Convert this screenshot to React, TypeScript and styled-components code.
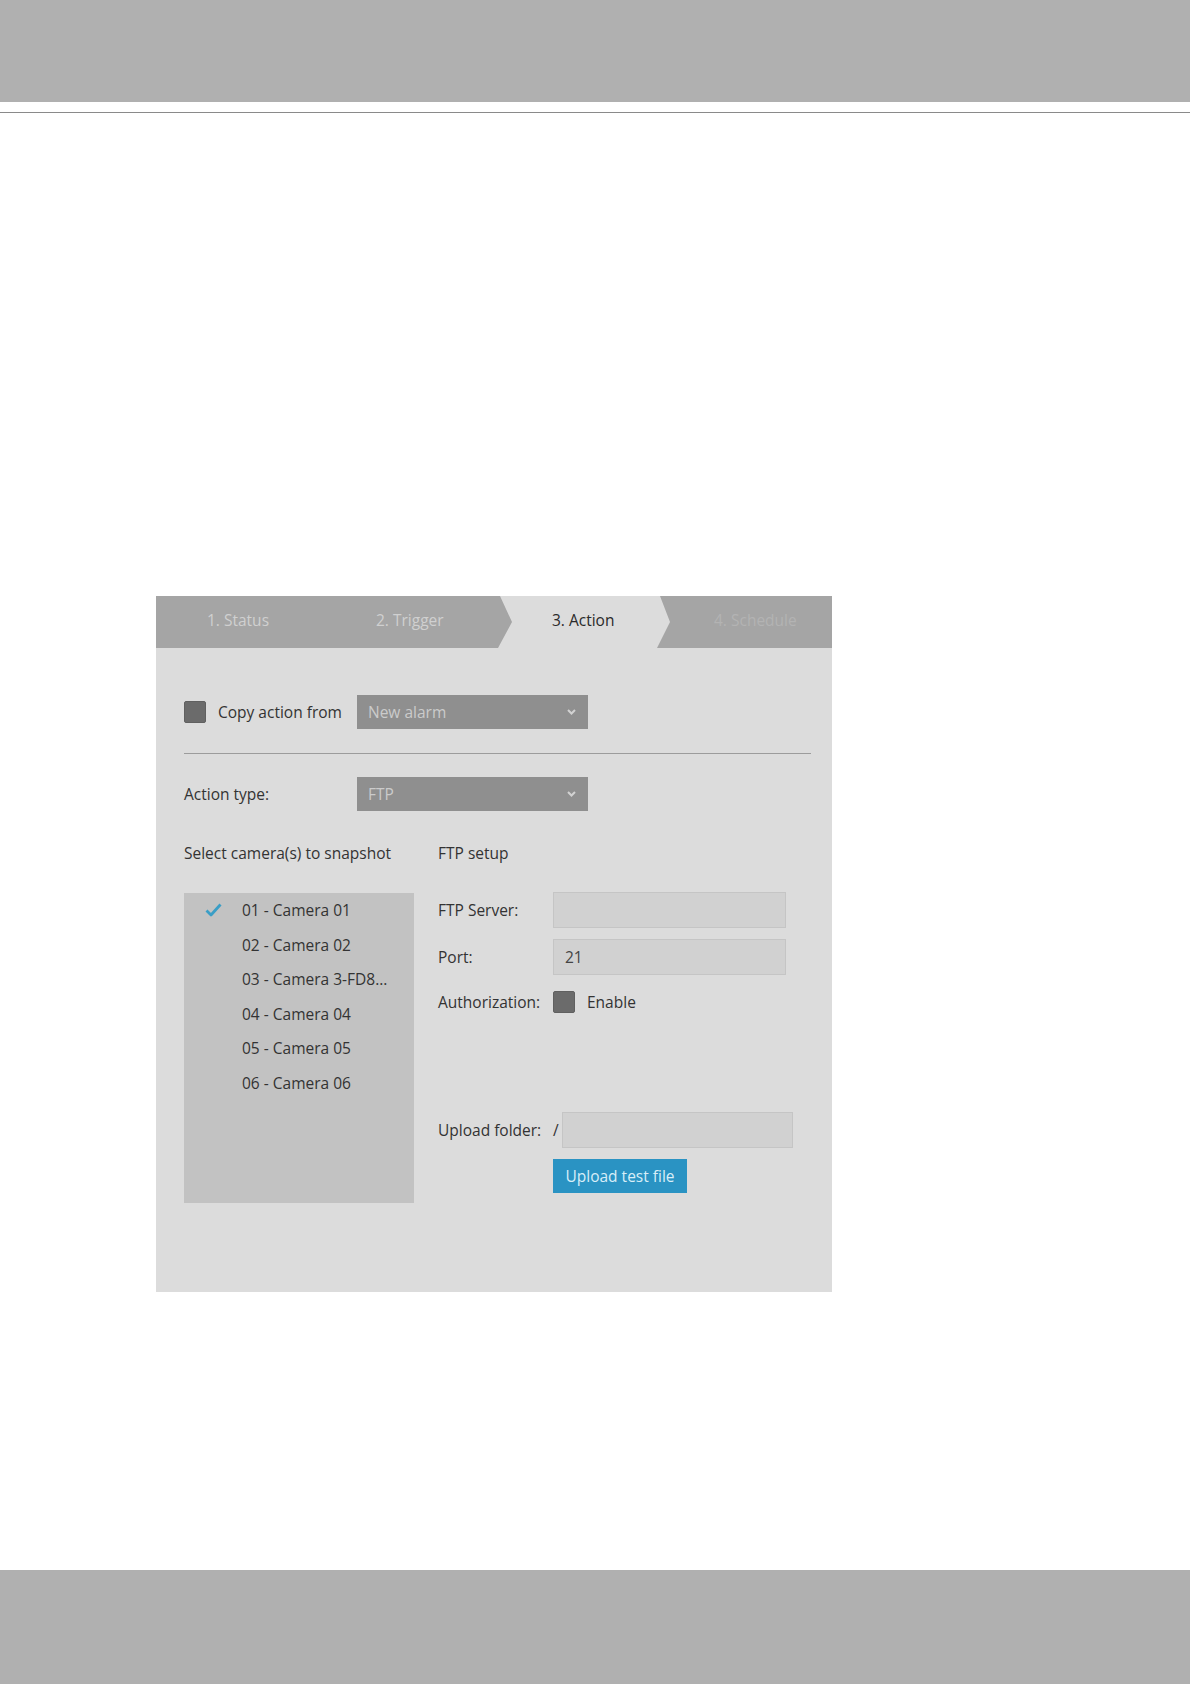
import * as React from 'react'
import styled, { createGlobalStyle } from 'styled-components'

const GlobalStyle = createGlobalStyle`
  body {
    margin: 0;
    background: #fff;
    font-family: 'Open Sans', 'Liberation Sans', sans-serif;
  }
`

const Page = styled.div`
  width: 1190px;
  height: 1684px;
  display: flex;
  flex-direction: column;
`

const TopBar = styled.div`
  height: 102px;
  background: #b0b0b0;
`

const Rule = styled.div`
  margin-top: 10px;
  border-top: 1px solid #8a8a8a;
`

const Main = styled.div`
  flex: 1;
  padding: 483px 0 0 156px;
`

const Footer = styled.div`
  height: 114px;
  background: #b0b0b0;
`

const Panel = styled.div`
  width: 676px;
  height: 696px;
  background: #dcdcdc;
  color: #333;
  font-size: 15.5px;
  line-height: 20px;
`

const TabBar = styled.div`
  height: 52px;
  background: #a5a5a5;
  display: grid;
  grid-template-columns: repeat(4, 169px);
`

const Tab = styled.div<{ $active?: boolean; $faint?: boolean }>`
  position: relative;
  display: flex;
  align-items: center;
  padding: 0 0 4px ${p => (p.$active ? '58px' : '51px')};
  color: ${p => (p.$active ? '#2a2a2a' : p.$faint ? '#b3b3b3' : '#d0d0d0')};
  z-index: ${p => (p.$active ? 1 : 0)};

  &::before {
    content: '';
    display: ${p => (p.$active ? 'block' : 'none')};
    position: absolute;
    top: 0;
    left: 0;
    width: 180px;
    height: 52px;
    background: #dcdcdc;
    clip-path: polygon(6px 0, 166px 0, 176px 26px, 163px 52px, 4px 52px, 18px 26px);
    z-index: -1;
  }
`

const Body = styled.div`
  padding: 47px 21px 0 28px;
`

const FieldRow = styled.div`
  display: grid;
  grid-template-columns: 173px 231px;
  align-items: center;
  height: 34px;
`

const CheckLabel = styled.label`
  display: flex;
  align-items: center;
  gap: 12px;
`

const Box = styled.span`
  width: 22px;
  height: 22px;
  box-sizing: border-box;
  background: #6b6b6b;
  border: 1px solid #606060;
  border-radius: 2px;
`

const Select = styled.div`
  height: 34px;
  background: #8f8f8f;
  color: #cbcbcb;
  display: flex;
  align-items: center;
  justify-content: space-between;
  padding: 0 12px 0 11px;
`

const Divider = styled.div`
  margin: 24px 0 23px;
  border-top: 1px solid #9c9c9c;
`

const Columns = styled.div`
  margin-top: 32px;
  display: grid;
  grid-template-columns: 230px 1fr;
  gap: 24px;
`

const Heading = styled.div`
  height: 20px;
`

const CameraList = styled.ul`
  list-style: none;
  margin: 30px 0 0;
  padding: 0;
  height: 310px;
  box-sizing: border-box;
  background: #c2c2c2;
`

const CameraRow = styled.li`
  height: 34.5px;
  display: flex;
  align-items: center;
`

const CheckSlot = styled.span`
  width: 58px;
  padding-left: 21px;
  box-sizing: border-box;
  display: flex;
  align-items: center;
`

const Form = styled.div`
  margin-top: 29px;
  display: flex;
  flex-direction: column;
`

const FormRow = styled.div<{ $gap?: number }>`
  display: flex;
  align-items: center;
  margin-top: ${p => p.$gap ?? 0}px;
`

const Label = styled.span`
  width: 115px;
  flex: none;
`

const Input = styled.div<{ $width?: number }>`
  width: ${p => p.$width ?? 233}px;
  height: 36px;
  box-sizing: border-box;
  background: #d1d1d1;
  border: 1px solid #c5c5c5;
  padding-left: 11px;
  display: flex;
  align-items: center;
  color: #444;
`

const Slash = styled.span`
  margin: 0 3px 0 0;
`

const Button = styled.button`
  margin: 11px 0 0 115px;
  width: 134px;
  height: 34px;
  border: none;
  background: #2a93c3;
  color: #d8eef8;
  font: inherit;
  padding: 0;
  align-self: flex-start;
`

const Chevron = () => (
  <svg width='9' height='6' viewBox='0 0 9 6'>
    <polyline points='1,1 4.5,4.5 8,1' fill='none' stroke='#d2d2d2' strokeWidth='2' />
  </svg>
)

const Tick = () => (
  <svg width='17' height='14' viewBox='0 0 17 14'>
    <path d='M1.5 7.5 L6 12 L15.5 1.5' fill='none' stroke='#3a9ec6' strokeWidth='2.8' strokeLinejoin='round' />
  </svg>
)

const cameras = [
  '01 - Camera 01',
  '02 - Camera 02',
  '03 - Camera 3-FD8...',
  '04 - Camera 04',
  '05 - Camera 05',
  '06 - Camera 06'
]

export default function App () {
  return (
    <Page>
      <GlobalStyle />
      <TopBar />
      <Rule />
      <Main>
        <Panel>
          <TabBar>
            <Tab>1. Status</Tab>
            <Tab>2. Trigger</Tab>
            <Tab $active>3. Action</Tab>
            <Tab $faint>4. Schedule</Tab>
          </TabBar>
          <Body>
            <FieldRow>
              <CheckLabel>
                <Box />
                Copy action from
              </CheckLabel>
              <Select>New alarm<Chevron /></Select>
            </FieldRow>
            <Divider />
            <FieldRow>
              <span>Action type:</span>
              <Select>FTP<Chevron /></Select>
            </FieldRow>
            <Columns>
              <div>
                <Heading>Select camera(s) to snapshot</Heading>
                <CameraList>
                  {cameras.map((name, i) => (
                    <CameraRow key={name}>
                      <CheckSlot>{i === 0 && <Tick />}</CheckSlot>
                      {name}
                    </CameraRow>
                  ))}
                </CameraList>
              </div>
              <div>
                <Heading>FTP setup</Heading>
                <Form>
                  <FormRow>
                    <Label>FTP Server:</Label>
                    <Input />
                  </FormRow>
                  <FormRow $gap={11}>
                    <Label>Port:</Label>
                    <Input>21</Input>
                  </FormRow>
                  <FormRow $gap={16}>
                    <Label>Authorization:</Label>
                    <CheckLabel>
                      <Box />
                      Enable
                    </CheckLabel>
                  </FormRow>
                  <FormRow $gap={99}>
                    <Label>Upload folder:</Label>
                    <Slash>/</Slash>
                    <Input $width={231} />
                  </FormRow>
                  <Button>Upload test file</Button>
                </Form>
              </div>
            </Columns>
          </Body>
        </Panel>
      </Main>
      <Footer />
    </Page>
  )
}
